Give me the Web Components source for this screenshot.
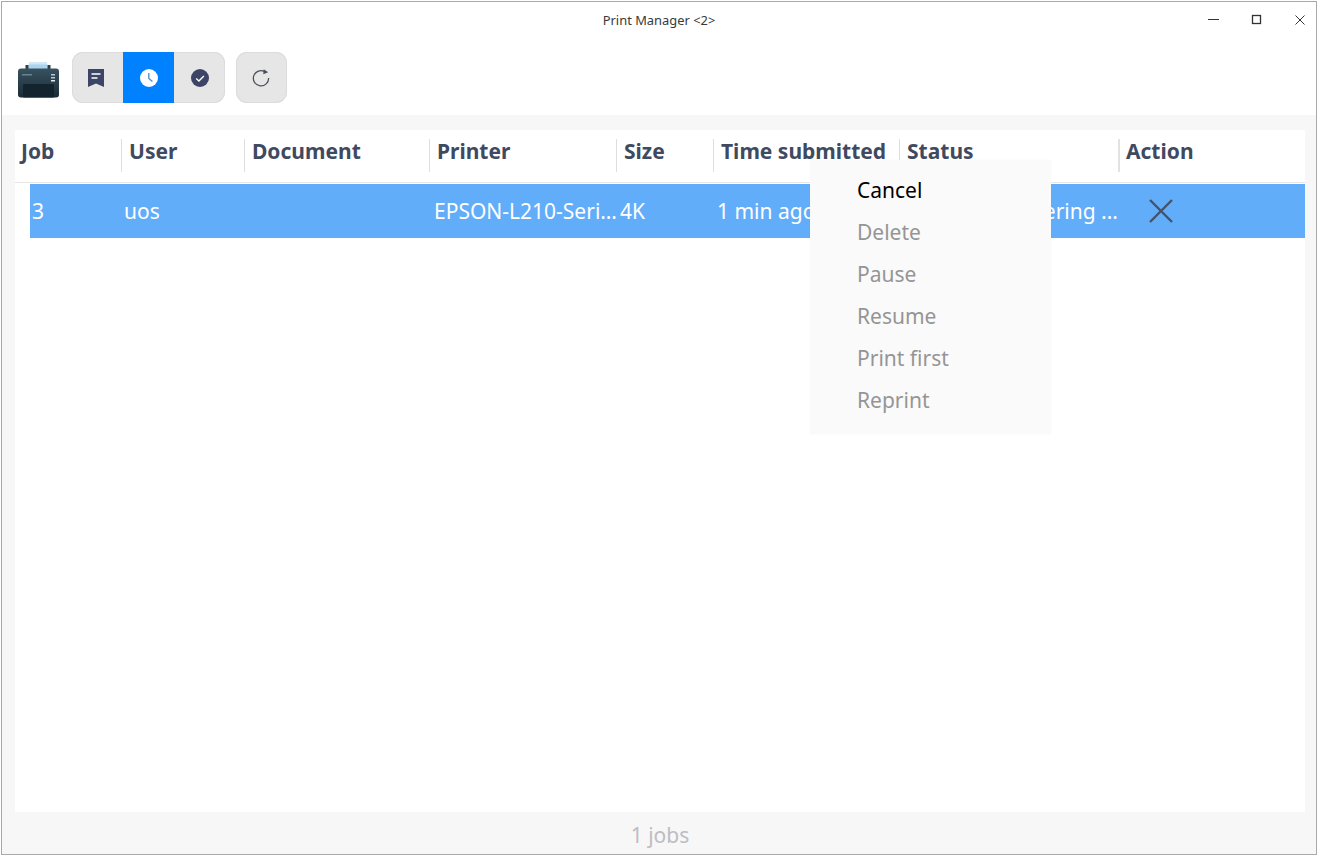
<!DOCTYPE html>
<html><head><meta charset="utf-8"><style>
html,body{margin:0;padding:0;background:#fff;font-family:"Noto Sans",sans-serif}
body{padding:1px;width:1320px;height:858px;box-sizing:border-box;overflow:hidden}
</style></head><body>
<pm-window>
<pm-titlebar slot="title">Print Manager &lt;2&gt;</pm-titlebar>
<pm-toolbar slot="tools"></pm-toolbar>
<pm-table slot="main"></pm-table>
<pm-footer slot="foot">1 jobs</pm-footer>
</pm-window>
<script>
function def(name,html){customElements.define(name,class extends HTMLElement{constructor(){super();this.attachShadow({mode:'open'}).innerHTML=html;}});}
def('pm-window',`<style>:host{display:flex;flex-direction:column;width:1316px;height:854px;box-sizing:border-box;border:1px solid #a9a9a9;background:#f7f7f7;position:relative}</style><slot name="title"></slot><slot name="tools"></slot><slot name="main"></slot><slot name="foot"></slot>`);
def('pm-titlebar',`<style>:host{display:grid;grid-template-columns:1fr auto 1fr;align-items:center;height:35px;background:#fff;font-size:12.9px;color:#3a3a3a}
.t{grid-column:2}
.c{grid-column:3;justify-self:end;display:flex}
.c svg{width:43px;height:35px;display:block}
</style><div class="t"><slot></slot></div><div class="c">
<svg viewBox="0 0 43 35"><path d="M21 17.500h11" stroke="#333" fill="none"/></svg>
<svg viewBox="0 0 43 35"><rect x="22.500" y="13.500" width="8" height="8" stroke="#333" stroke-width="1.300" fill="none"/></svg>
<svg viewBox="0 0 43 35"><path d="M22.500 13.500l9 9M31.500 13.500l-9 9" stroke="#333" fill="none"/></svg>
</div>`);
def('pm-toolbar',`<style>:host{display:flex;align-items:center;gap:11px;height:78px;box-sizing:border-box;background:#fff;padding:3px 0 0 13px;flex:none}
.logo{width:46px;height:42px;flex:none}
.grp{display:flex;height:51px;border-radius:11px;overflow:hidden;background:#e6e6e6;box-shadow:inset 0 0 0 1px #dcdcdc}
.b{width:51px;height:51px;display:flex;align-items:center;justify-content:center}
.b.on{background:#0081ff}
svg{display:block}
</style>
<svg class="logo" viewBox="0 0 46 42">
<defs><linearGradient id="p" x1="0" y1="0" x2="0" y2="1"><stop offset="0" stop-color="#38525f"/><stop offset="1" stop-color="#1a2c36"/></linearGradient></defs>
<path d="M14 5.500h18l1 7H13z" fill="#a9d3ef"/><rect x="14" y="5.500" width="18" height="2" fill="#cfe7f7"/>
<rect x="10.500" y="8" width="3" height="5" fill="#26404f"/><rect x="32.500" y="8" width="3" height="5" fill="#26404f"/>
<rect x="3" y="11.500" width="41" height="29" rx="3" fill="url(#p)"/>
<rect x="8" y="27" width="31" height="13.500" rx="1" fill="#14242e"/>
<rect x="7" y="17" width="10" height="1.500" fill="#6d8390"/>
<rect x="36" y="17" width="4" height="1.500" fill="#b9c7cf"/><rect x="36" y="20" width="4" height="1.500" fill="#b9c7cf"/><rect x="36" y="23" width="4" height="1.500" fill="#e7eef2"/>
</svg>
<div class="grp">
<div class="b"><svg style="margin-right:3px" width="16" height="18" viewBox="0 0 16 18"><path d="M0 0h16v18l-8-3.500L0 18z" fill="#3d4566"/><path d="M3.500 5h9M3.500 9h6" stroke="#fff" stroke-width="1.500"/></svg></div>
<div class="b on"><svg width="18" height="18" viewBox="0 0 20 20"><circle cx="10" cy="10" r="10" fill="#fff"/><path d="M9.800 4.500v6l4 3.500" stroke="#4a8fd0" stroke-width="1.500" fill="none"/></svg></div>
<div class="b"><svg width="18" height="18" viewBox="0 0 20 20"><circle cx="10" cy="10" r="10" fill="#3d4566"/><path d="M5.800 10.500l3 2.800 5.500-5.600" stroke="#fff" stroke-width="1.600" fill="none"/></svg></div>
</div>
<div class="grp"><div class="b"><svg style="margin-right:1px" width="18" height="18" viewBox="0 0 20 20"><path d="M13.600 2.600A8.500 8.500 0 1 0 18.500 10" stroke="#4a4f5e" stroke-width="1.400" fill="none"/><path d="M13 .2l5 3.300-5.500 2.200z" fill="#4a4f5e"/></svg></div></div>`);
def('pm-table',`<style>:host{display:block;flex:1;margin:15px 11px 0 13px;background:#fff;position:relative;min-height:0}
.g{display:grid}
.h{grid-template-columns:106px 123px 185px 187px 97px 186px 219px 187px;height:53px;box-sizing:border-box;border-bottom:1px solid #e6e6e6;align-items:center;font-weight:700;font-size:21px;color:#3f4a60}
.h div{height:33px;line-height:25px;padding-left:7px;margin-top:-1px;border-left:1px solid #dedede;white-space:nowrap}
.h div:first-child{border-left:0;padding-left:6px}
.h div:nth-child(n+4){padding-left:7px}
.h div:last-child{border-left:2px solid #e2e2e2;padding-left:6px}
.r{grid-template-columns:91px 122px 188px 186px 97px 186px 218px 187px;height:54px;margin:1px 0 0 15px;box-sizing:border-box;background:#62adfa;color:#fff;font-size:21px;align-items:center}
.r div{padding-left:3px;white-space:nowrap;overflow:hidden}
.r div:first-child{padding-left:2px}
.r .s{display:flex;justify-content:flex-end;padding:0}
.r .a{padding-left:30px;height:26px}
.a svg{display:block}
</style>
<div class="g h"><div>Job</div><div>User</div><div>Document</div><div>Printer</div><div>Size</div><div>Time submitted</div><div>Status</div><div>Action</div></div>
<div class="g r"><div>3</div><div>uos</div><div></div><div>EPSON-L210-Seri…</div><div>4K</div><div>1 min ago</div><div class="s">Rendering ...</div><div class="a"><svg width="26" height="26" viewBox="0 0 26 26"><path d="M2 2l22 22M24 2L2 24" stroke="#465266" stroke-width="2.400" fill="none"/></svg></div></div>
<pm-menu></pm-menu>`);
def('pm-menu',`<style>:host{position:absolute;left:795px;top:30px;width:241px;box-sizing:border-box;padding:9px 0 13px 47px;background:#fafafa;font-size:21px;color:#959595;display:block;box-shadow:0 0 2px rgba(0,0,0,.03)}
div{height:42px;line-height:42px}.on{color:#000}</style>
<div class="on">Cancel</div><div>Delete</div><div>Pause</div><div>Resume</div><div>Print first</div><div>Reprint</div>`);
def('pm-footer',`<style>:host{display:flex;height:42px;flex:none;align-items:center;justify-content:center;font-size:21px;color:#bdbdc2;padding:4px 0 0 2px;box-sizing:border-box}</style><slot></slot>`);
</script>
</body></html>
